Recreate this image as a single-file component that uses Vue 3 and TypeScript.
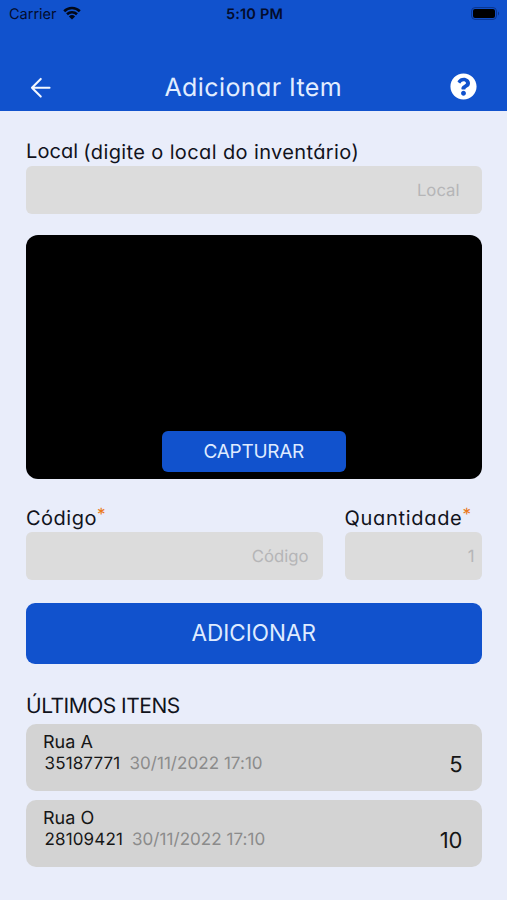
<script setup lang="ts">
interface Item {
  local: string
  codigo: string
  data: string
  quantidade: number
}

const itens: Item[] = [
  { local: 'Rua A', codigo: '35187771', data: '30/11/2022 17:10', quantidade: 5 },
  { local: 'Rua O', codigo: '28109421', data: '30/11/2022 17:10', quantidade: 10 },
]
</script>

<template>
  <div class="screen">
    <header class="header">
      <div class="status">
        <div class="carrier">
          <span>Carrier</span>
          <svg class="wifi" viewBox="0 0 18 14">
            <path d="M1.2 5.2a11.2 11.2 0 0 1 15.6 0" />
            <path d="M4 8.2a7.2 7.2 0 0 1 10 0" />
            <path class="dot" d="M9 13.6 5.9 10.4a4.5 4.5 0 0 1 6.2 0z" />
          </svg>
        </div>
        <span class="clock">5:10 PM</span>
        <svg class="battery" viewBox="0 0 29 13">
          <rect class="shell" x="0.6" y="0.6" width="24.8" height="11.8" rx="3.4" />
          <rect x="2" y="2" width="22" height="9" rx="2" />
          <path class="cap" d="M27 4.5v4c1.4-.6 1.4-3.4 0-4z" />
        </svg>
      </div>
      <nav class="nav">
        <svg class="back" viewBox="0 0 22 22">
          <path d="M20 11H2M11 2l-9 9 9 9" />
        </svg>
        <h1>Adicionar Item</h1>
        <svg class="help" viewBox="0 0 512 512">
          <path d="M504 256c0 136.997-111.043 248-248 248S8 392.997 8 256C8 119.083 119.043 8 256 8s248 111.083 248 248zM262.655 90c-54.497 0-89.255 22.957-116.549 63.758-3.536 5.286-2.353 12.415 2.715 16.258l34.699 26.31c5.205 3.947 12.621 3.008 16.665-2.122 17.864-22.658 30.113-35.797 57.303-35.797 20.429 0 45.698 13.148 45.698 32.958 0 14.976-12.363 22.667-32.534 33.976C247.128 238.528 216 254.941 216 296v4c0 6.627 5.373 12 12 12h56c6.627 0 12-5.373 12-12v-1.333c0-28.462 83.186-29.647 83.186-106.667 0-58.002-60.165-102-116.531-102zM256 338c-25.365 0-46 20.635-46 46 0 25.364 20.635 46 46 46s46-20.636 46-46c0-25.365-20.635-46-46-46z" />
        </svg>
      </nav>
    </header>

    <main class="content">
      <div class="label"><span class="local">Local</span><span class="hint">(digite o local do inventário)</span></div>
      <div class="input input-local"><span>Local</span></div>

      <section class="camera">
        <button class="capture">CAPTURAR</button>
      </section>

      <div class="fields">
        <div>
          <div class="label"><span class="codigo">Código</span><i>*</i></div>
          <div class="input input-codigo"><span>Código</span></div>
        </div>
        <div>
          <div class="label"><span class="quantidade">Quantidade</span><i>*</i></div>
          <div class="input input-quantidade"><span>1</span></div>
        </div>
      </div>

      <button class="add">ADICIONAR</button>

      <h2>ÚLTIMOS ITENS</h2>
      <ul>
        <li v-for="item in itens" :key="item.codigo">
          <div class="info">
            <div class="place">{{ item.local }}</div>
            <div class="detail">
              <span>{{ item.codigo }}</span>
              <time>{{ item.data }}</time>
            </div>
          </div>
          <strong>{{ item.quantidade }}</strong>
        </li>
      </ul>
    </main>
  </div>
</template>

<style>
body {
  background: #e9edfa;
}
</style>

<style scoped>
.screen {
  height: 900px;
  overflow: hidden;
  background: #e9edfa;
  color: #11131c;
  font-family: Inter, "Liberation Sans", sans-serif;
  text-rendering: geometricPrecision;
}
.header {
  box-sizing: border-box;
  height: 110.5px;
  background: #1152cd;
  color: #030c2c;
}
.status {
  display: grid;
  grid-template-columns: 1fr auto 1fr;
  align-items: center;
  height: 27px;
  padding: 0 7px 0 9px;
  font-size: 14.5px;
}
.carrier {
  display: flex;
  align-items: center;
  gap: 6px;
}
.carrier span,
.clock {
  padding-top: 1.5px;
}
.wifi {
  width: 18px;
  height: 14px;
  margin-top: -2px;
  fill: none;
  stroke: #020817;
  stroke-width: 2.6;
}
.wifi .dot {
  fill: #020817;
  stroke: none;
}
.clock {
  font-weight: 600;
  letter-spacing: 0.2px;
}
.battery {
  justify-self: end;
  width: 29px;
  height: 13px;
  fill: #000;
}
.battery .shell {
  fill: none;
  stroke: #0b348c;
}
.battery .cap {
  fill: #0b348c;
}
.nav {
  display: grid;
  grid-template-columns: 1fr auto 1fr;
  align-items: center;
  height: 40px;
  margin-top: 40px;
  padding: 0 30px 0 29.5px;
}
.back {
  width: 21.5px;
  height: 21.5px;
  margin-top: 1px;
  fill: none;
  stroke: #f3f7ff;
  stroke-width: 2.1;
  stroke-linecap: round;
  stroke-linejoin: round;
}
h1 {
  margin: 2px 0 0;
  color: #e2edff;
  font-size: 25px;
  font-weight: 400;
  letter-spacing: 0.4px;
  font-feature-settings: "cv11";
}
.help {
  justify-self: end;
  width: 27px;
  height: 27px;
  margin-bottom: 2px;
  fill: #fff;
}
.content {
  padding: 0 25.5px 0 26px;
}
.label {
  display: flex;
  height: 30px;
  line-height: 30px;
  font-size: 20px;
  white-space: nowrap;
  font-feature-settings: "cv11";
}
.content > .label {
  padding-top: 25.5px;
}
.local {
  margin-top: -0.5px;
  letter-spacing: 0.1px;
}
.hint {
  margin: 0.5px 0 0 5px;
  letter-spacing: 0.38px;
}
.codigo {
  margin-top: 1px;
  letter-spacing: 0.5px;
}
.quantidade {
  margin-top: 1px;
  letter-spacing: 0.7px;
}
.label i {
  margin-top: -2px;
  color: #ea7a1c;
  font-style: normal;
  font-size: 17px;
}
.input {
  display: flex;
  align-items: center;
  justify-content: flex-end;
  box-sizing: border-box;
  height: 47.5px;
  padding-top: 1.5px;
  border-radius: 6px;
  background: #dcdcdc;
  color: #b5b5b7;
  font-size: 16.7px;
}
.input-local {
  padding-right: 22px;
}
.input-codigo {
  padding-right: 14px;
}
.input-quantidade {
  padding-right: 7px;
}
.camera {
  display: flex;
  align-items: flex-end;
  justify-content: center;
  box-sizing: border-box;
  height: 244px;
  margin-top: 21.5px;
  padding-bottom: 7px;
  border-radius: 12px;
  background: #000;
}
button {
  padding: 0;
  border: 0;
  background: #1152cd;
  color: #dfebff;
  font-family: inherit;
}
.capture {
  width: 184px;
  height: 41px;
  border-radius: 6px;
  font-size: 19px;
  letter-spacing: -0.3px;
}
.fields {
  display: grid;
  grid-template-columns: 296.5px 137px;
  gap: 22px;
  margin-top: 23px;
}
.add {
  display: block;
  width: 100%;
  height: 61px;
  margin-top: 23.5px;
  padding-bottom: 2px;
  border-radius: 9px;
  font-size: 22.5px;
}
h2 {
  height: 29px;
  margin: 28px 0 3px;
  font-size: 21px;
  font-weight: 400;
  line-height: 29px;
  letter-spacing: -0.5px;
}
ul {
  display: grid;
  gap: 9px;
  margin: 0;
  padding: 0;
  list-style: none;
}
li {
  display: flex;
  justify-content: space-between;
  box-sizing: border-box;
  height: 67px;
  padding: 8px 19px 0 17px;
  border-radius: 10px;
  background: #d3d3d3;
  color: #161616;
}
.place {
  font-size: 18px;
  line-height: 22px;
}
.detail {
  display: flex;
  gap: 9px;
  padding-left: 1.5px;
  font-size: 17px;
  line-height: 21px;
  letter-spacing: 0.15px;
}
.detail time {
  color: #8b8b8b;
  letter-spacing: 0.05px;
}
strong {
  padding-top: 18px;
  font-size: 22px;
  font-weight: 400;
  line-height: 30px;
}
</style>
